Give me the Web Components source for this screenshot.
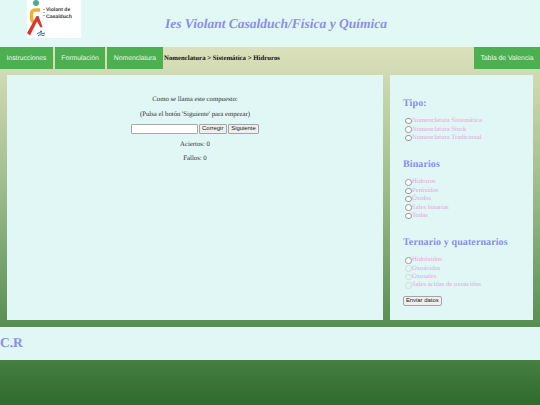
<!DOCTYPE html>
<html lang="es">
<head>
<meta charset="utf-8">
<title>Ies Violant Casalduch</title>
<style>
  html,body{margin:0;height:405px;overflow:hidden}
  body{font-family:"Liberation Serif",serif;text-rendering:geometricPrecision;background:linear-gradient(#dce1bb 47px,#9dbb8c 190px,#5c9055 320px,#2d6b2b 405px)}
</style>
</head>
<body>
<site-header></site-header>
<site-nav></site-nav>
<main-area>
  <quiz-panel></quiz-panel>
  <options-panel></options-panel>
</main-area>
<site-footer></site-footer>

<script>
// each section is its own element, markup and styles in the shadow root
function define(name, html){
  customElements.define(name, class extends HTMLElement{
    constructor(){
      super();
      this.attachShadow({mode:'open'}).innerHTML = html;
    }
  });
}

define('site-logo', `
  <style>
    :host{display:block;width:54px;height:38px;background:#fff;flex:none}
    .w{display:flex;height:100%}
    svg{width:19px;height:38px;flex:none}
    .t{font:700 5.100px/7px "Liberation Sans",sans-serif;color:#333;padding:7px 0 0 0;white-space:nowrap}
  </style>
  <div class="w">
    <svg viewBox="0 0 19 38">
      <circle cx="9" cy="3" r="3" fill="#4fa897"/>
      <path d="M13 10H8Q4.500 10 4.500 14v4q0 4 4 5" fill="none" stroke="#eeb32e" stroke-width="3.400"/>
      <path d="M0 33 9.500 16l2 0 4 11-2 .5-3.500-6-7 14z" fill="#d33a33"/>
      <path d="M10 34q2-2 4-1t4 0M11 36q2-2 3.500-1t3 0" fill="none" stroke="#3a6f92" stroke-width="1"/>
      <circle cx="14" cy="31.500" r="1" fill="#3a6f92"/>
      <path d="M17 9v1M17 12v1M17 15v1" stroke="#666" stroke-width="1"/>
    </svg>
    <div class="t">Violant de<br>Casalduch</div>
  </div>`);

define('site-header', `
  <style>
    :host{display:flex;height:47px;background:#e2f8f5;padding-left:27px;box-sizing:border-box}
    h1{flex:1;margin:0;padding:15px 0 0 84px;font:italic 700 13.500px/18px "Liberation Serif",serif;color:#8a8eea;white-space:nowrap}
  </style>
  <site-logo></site-logo>
  <h1>Ies Violant Casalduch/Física y Química</h1>`);

define('site-nav', `
  <style>
    :host{display:flex;height:22px;align-items:stretch;font:6.800px "Liberation Sans",sans-serif}
    a{display:flex;align-items:center;justify-content:center;background:#4caf50;color:#eef7ee;margin-right:2px}
    .crumb{flex:1;display:flex;align-items:center;font:700 6.800px "Liberation Serif",serif;color:#111;margin-left:-1px;padding-left:0}
    a:last-child{margin:0;width:66px}
  </style>
  <a style="width:53px">Instrucciones</a>
  <a style="width:50px">Formulación</a>
  <a style="width:56px">Nomenclatura</a>
  <span class="crumb">Nomenclatura &gt; Sistemática &gt; Hidruros</span>
  <a>Tabla de Valencia</a>`);

define('main-area', `
  <style>
    :host{display:flex;gap:7px;padding:6px 7px 0;height:245px}
  </style>
  <slot></slot>`);

define('quiz-panel', `
  <style>
    :host{display:block;width:376px;height:245px;box-sizing:border-box;background:#e0f7f5;padding-top:21px;text-align:center;font:6.750px/8px "Liberation Serif",serif;color:#333}
    p{margin:0 0 6.500px}
    .row{display:flex;justify-content:center;gap:1px;height:10px;margin:-1px 0 6.500px}
    input{box-sizing:border-box;width:67px;height:9.500px;margin:0;padding:0;border:1px solid #aaa;background:#fff;border-radius:1px}
    button{box-sizing:border-box;height:9.500px;padding:0;border:1px solid #a5a5a5;border-radius:1px;background:#efefef;font:5.900px/7px "Liberation Sans",sans-serif;color:#222;white-space:nowrap}
    .a{width:28px}.b{width:31.500px}
  </style>
  <p>Como se llama este compuesto:</p>
  <p>(Pulsa el botón 'Siguiente' para empezar)</p>
  <div class="row">
    <input type="text" aria-label="Respuesta">
    <button class="a">Corregir</button><button class="b">Siguiente</button>
  </div>
  <p>Aciertos: 0</p>
  <p>Fallos: 0</p>`);

define('radio-option', `
  <style>
    :host{display:flex;align-items:center;height:8.400px;font:6.650px/8px "Liberation Serif",serif;color:#e8a4df}
    i{box-sizing:border-box;width:6.500px;height:6.500px;border:1px solid #999;border-radius:50%;background:#fff;margin:0 .5px 0 2px;flex:none}
    :host([disabled]) i{border-color:#d0dcda;background:transparent}
  </style>
  <i></i><slot></slot>`);

define('options-panel', `
  <style>
    :host{display:block;width:143px;height:245px;box-sizing:border-box;background:#e0f7f5;padding:22px 0 0 13px}
    h2{margin:0;font:700 10px/13px "Liberation Serif",serif;color:#8a8eea;letter-spacing:.1px;white-space:nowrap}
    .g{padding-left:0;margin-top:7px;margin-bottom:16px}
    .g.last{margin-bottom:6.500px}
    button{display:block;box-sizing:border-box;height:9.500px;width:38.500px;padding:0;border:1px solid #a5a5a5;border-radius:2px;background:#efefef;font:5.900px/7px "Liberation Sans",sans-serif;color:#222;white-space:nowrap}
  </style>
  <h2>Tipo:</h2>
  <div class="g">
    <radio-option>Nomenclatura Sistemática</radio-option>
    <radio-option>Nomenclatura Stock</radio-option>
    <radio-option>Nomenclatura Tradicional</radio-option>
  </div>
  <h2>Binarios</h2>
  <div class="g">
    <radio-option>Hidruros</radio-option>
    <radio-option>Peróxidos</radio-option>
    <radio-option>Óxidos</radio-option>
    <radio-option>Sales binarias</radio-option>
    <radio-option>Todas</radio-option>
  </div>
  <h2>Ternario y quaternarios</h2>
  <div class="g last">
    <radio-option>Hidróxidos</radio-option>
    <radio-option disabled>Oxoácidos</radio-option>
    <radio-option disabled>Oxosales</radio-option>
    <radio-option disabled>Sales ácidas de oxoácidos</radio-option>
  </div>
  <button>Enviar datos</button>`);

define('site-footer', `
  <style>
    :host{display:block;height:33px;margin-top:7px;box-sizing:border-box;background:#e0f7f5;padding-top:8px;font:700 13.500px/15px "Liberation Serif",serif;color:#8a8eea}
  </style>
  C.R`);
</script>
</body>
</html>
